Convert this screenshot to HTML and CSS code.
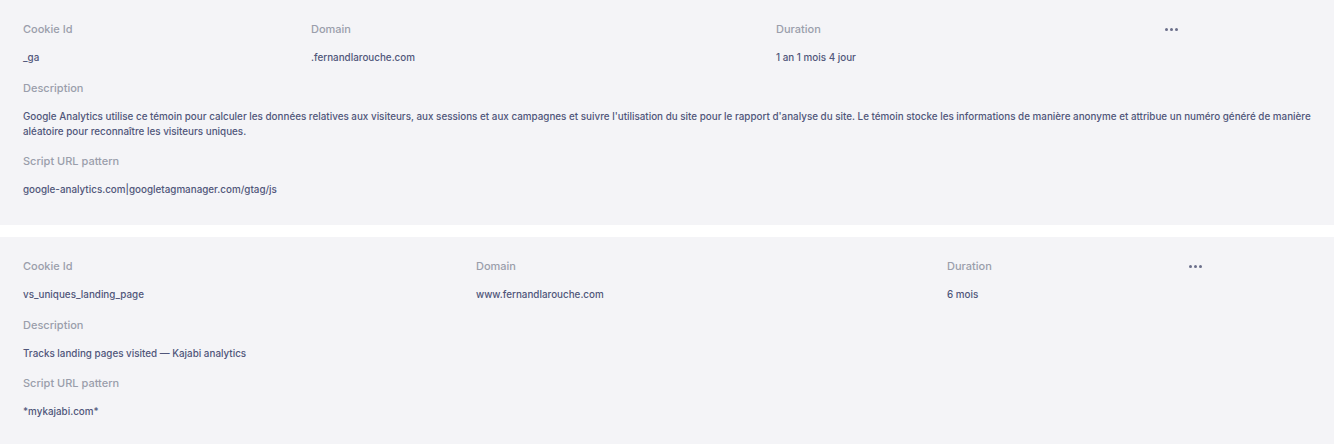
FILE: index.html
```html
<!DOCTYPE html>
<html lang="fr">
<head>
    <meta charset="UTF-8">
    <meta name="viewport" content="width=device-width, initial-scale=1.0">
    <title>Cookies</title>
    <link rel="stylesheet" href="styles.css">
</head>
<body>

<div class="cookie-card cookie-card--first">
    <div class="cookie-row">
        <div class="cookie-col">
            <div class="label">Cookie Id</div>
            <div class="value">_ga</div>
        </div>
        <div class="cookie-col">
            <div class="label">Domain</div>
            <div class="value">.fernandlarouche.com</div>
        </div>
        <div class="cookie-col">
            <div class="label">Duration</div>
            <div class="value">1 an 1 mois 4 jour</div>
        </div>
        <div class="cookie-menu"><span></span><span></span><span></span></div>
    </div>
    <div class="label">Description</div>
    <div class="value text">Google Analytics utilise ce témoin pour calculer les données relatives aux visiteurs, aux sessions et aux campagnes et suivre l'utilisation du site pour le rapport d'analyse du site. Le témoin stocke les informations de manière anonyme et attribue un numéro généré de manière aléatoire pour reconnaître les visiteurs uniques.</div>
    <div class="label">Script URL pattern</div>
    <div class="value">google-analytics.com|googletagmanager.com/gtag/js</div>
</div>

<div class="cookie-card cookie-card--second">
    <div class="cookie-row">
        <div class="cookie-col">
            <div class="label">Cookie Id</div>
            <div class="value">vs_uniques_landing_page</div>
        </div>
        <div class="cookie-col">
            <div class="label">Domain</div>
            <div class="value">www.fernandlarouche.com</div>
        </div>
        <div class="cookie-col">
            <div class="label">Duration</div>
            <div class="value">6 mois</div>
        </div>
        <div class="cookie-menu"><span></span><span></span><span></span></div>
    </div>
    <div class="label">Description</div>
    <div class="value text">Tracks landing pages visited — Kajabi analytics</div>
    <div class="label">Script URL pattern</div>
    <div class="value">*mykajabi.com*</div>
</div>

</body>
</html>
```

FILE: styles.css
```css
body {
    margin: 0;
    background-color: #ffffff;
    font-family: Inter, "Noto Sans", sans-serif;
}
.cookie-card {
    background-color: #f4f4f7;
    padding: 21px 23px 28px 23px;
}
.cookie-card--first {
    margin-bottom: 12px;
}
.cookie-row {
    display: grid;
    align-items: start;
}
.cookie-card--first .cookie-row {
    grid-template-columns: 288px 465px 389px 30px;
}
.cookie-card--second .cookie-row {
    grid-template-columns: 453px 471px 242px 30px;
}
.label {
    font-size: 11px;
    font-weight: 500;
    color: #9a9eab;
    line-height: 16px;
    margin-bottom: 13px;
}
.value {
    font-size: 9.85px;
    font-weight: 500;
    color: #50567a;
    line-height: 15px;
    margin-bottom: 15px;
}
.text {
    margin-bottom: 14px;
}
.cookie-card > .value:last-child {
    margin-bottom: 0;
}
.cookie-menu {
    display: flex;
    gap: 2px;
    padding-top: 7px;
}
.cookie-menu span {
    width: 3px;
    height: 3px;
    border-radius: 50%;
    background-color: #6b6f8a;
}
```
